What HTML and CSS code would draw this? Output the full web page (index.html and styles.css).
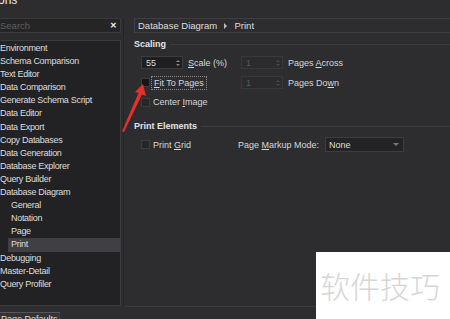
FILE: index.html
```html
<!DOCTYPE html>
<html lang="en">
<head>
    <meta charset="UTF-8">
    <title>Options</title>
    <link rel="stylesheet" href="styles.css">
</head>
<body>
    <div class="title"><span>ons</span></div>

    <div class="main">
        <aside class="nav">
            <div class="search">
                <span class="placeholder">Search</span>
                <span class="clear">&#x2715;</span>
            </div>
            <ul class="tree">
                <li>Environment</li>
                <li>Schema Comparison</li>
                <li>Text Editor</li>
                <li>Data Comparison</li>
                <li>Generate Schema Script</li>
                <li>Data Editor</li>
                <li>Data Export</li>
                <li>Copy Databases</li>
                <li>Data Generation</li>
                <li>Database Explorer</li>
                <li>Query Builder</li>
                <li>Database Diagram</li>
                <li class="child">General</li>
                <li class="child">Notation</li>
                <li class="child">Page</li>
                <li class="child selected">Print</li>
                <li>Debugging</li>
                <li>Master-Detail</li>
                <li>Query Profiler</li>
            </ul>
            <div class="foot-btn">t Page Defaults</div>
        </aside>

        <section class="page">
            <div class="crumb">Database Diagram <span class="crumb-sep"></span> Print</div>

            <div class="group-title"><span>Scaling</span></div>
            <div class="rows">
                <div class="row">
                    <div class="cell">
                        <div class="spin"><span>55</span><span class="spin-arrows"><i class="up"></i><i class="down"></i></span></div>
                        <span class="label"><u>S</u>cale (%)</span>
                    </div>
                    <div class="cell">
                        <div class="spin disabled"><span>1</span><span class="spin-arrows"><i class="up"></i><i class="down"></i></span></div>
                        <span class="label">Pages <u>A</u>cross</span>
                    </div>
                </div>
                <div class="row">
                    <div class="cell">
                        <span class="check filled"></span>
                        <span class="label focus"><u>F</u>it To Pages</span>
                    </div>
                    <div class="cell">
                        <div class="spin disabled"><span>1</span><span class="spin-arrows"><i class="up"></i><i class="down"></i></span></div>
                        <span class="label">Pages Do<u>w</u>n</span>
                    </div>
                </div>
                <div class="row">
                    <div class="cell">
                        <span class="check"></span>
                        <span class="label">Center <u>I</u>mage</span>
                    </div>
                </div>
            </div>

            <div class="group-title second"><span>Print Elements</span></div>
            <div class="rows">
                <div class="row">
                    <div class="cell">
                        <span class="check"></span>
                        <span class="label">Print <u>G</u>rid</span>
                    </div>
                    <div class="cell markup">
                        <span class="label">Page <u>M</u>arkup Mode:</span>
                        <div class="select"><span>None</span><span class="caret"></span></div>
                    </div>
                </div>
            </div>
        </section>
    </div>

    <svg class="arrow" width="36" height="56" viewBox="0 0 36 56">
        <polygon points="27,1 30,13 26,11.5 8,49 6,48.5 22.5,10 19,9" fill="#e5302b"/>
    </svg>

    <div class="watermark">软件技巧</div>
</body>
</html>
```

FILE: styles.css
```css
body {
    margin: 0;
    background-color: #2d2d30;
    color: #dedede;
    font-family: 'Liberation Sans', Arial, sans-serif;
    font-size: 9px;
    width: 450px;
    height: 319px;
    overflow: hidden;
    position: relative;
}

.title {
    height: 18px;
    overflow: hidden;
    font-size: 12px;
    color: #e8e8e8;
}

.title span {
    display: block;
    margin-top: -7px;
    margin-left: -2px;
}

.main {
    display: flex;
}

/* colonne de gauche */
.nav {
    width: 121px;
    flex-shrink: 0;
    display: flex;
    flex-direction: column;
}

.search {
    height: 15px;
    box-sizing: border-box;
    background-color: #252526;
    border: 1px solid #3a3a3d;
    border-left: none;
    display: flex;
    align-items: center;
    justify-content: space-between;
    padding: 0 3px 0 0;
}

.search .placeholder {
    color: #5e5e62;
    font-size: 9.5px;
}

.search .clear {
    color: #f2f2f2;
    font-size: 8px;
    font-weight: bold;
}

.tree {
    list-style: none;
    margin: 7px 0 0;
    padding: 1px 0 0;
    height: 266px;
    box-sizing: border-box;
    background-color: #222224;
    border: 1px solid #3c3c3f;
    border-left: none;
}

.tree li {
    line-height: 13.1px;
    height: 13.1px;
    white-space: nowrap;
    letter-spacing: -0.3px;
}

.tree li.child {
    margin-left: 8px;
    padding-left: 3px;
}

.tree li.selected {
    background-color: #404044;
}

.foot-btn {
    margin-top: 6px;
    height: 14px;
    width: 60px;
    box-sizing: border-box;
    border-top: 1px solid #55555a;
    border-right: 1px solid #45454a;
    background-color: #333336;
    line-height: 13px;
    white-space: nowrap;
    overflow: hidden;
    text-indent: -4px;
}

/* panneau de droite */
.page {
    flex: 1;
    margin-left: 2px;
    padding-left: 10px;
    height: 289px;
    border-left: 1px solid #242426;
    border-bottom: 1px solid #3a3a3d;
    box-sizing: border-box;
    min-width: 0;
}

.crumb {
    height: 15px;
    box-sizing: border-box;
    border: 1px solid #404044;
    border-right: none;
    line-height: 13px;
    padding-left: 3px;
    font-size: 9.5px;
    white-space: nowrap;
}

.crumb-sep {
    display: inline-block;
    width: 0;
    height: 0;
    border-left: 3px solid #bbbbbb;
    border-top: 3px solid transparent;
    border-bottom: 3px solid transparent;
    margin: 0 5px 0 4px;
    vertical-align: 0;
}

.group-title {
    display: flex;
    align-items: center;
    margin-top: 5px;
    height: 12px;
    font-weight: bold;
    color: #e4e4e4;
}

.group-title::after {
    content: "";
    flex: 1;
    height: 1px;
    background-color: #3c3c40;
    margin-left: 4px;
}

.group-title.second {
    margin-top: 8px;
}

.rows {
    padding-left: 7px;
    margin-top: 3px;
}

.row {
    display: grid;
    grid-template-columns: 100px auto;
    align-items: center;
    height: 19.7px;
}

.cell {
    display: flex;
    align-items: center;
}

.cell.markup {
    margin-left: -3px;
}

.label {
    white-space: nowrap;
    color: #d8d8d8;
}

.spin {
    flex-shrink: 0;
    width: 42px;
    height: 13px;
    box-sizing: border-box;
    background-color: #1f1f21;
    border: 1px solid #3d3d40;
    display: flex;
    align-items: center;
    justify-content: space-between;
    padding: 0 2px 0 4px;
    margin-right: 5px;
}

.spin-arrows {
    display: flex;
    flex-direction: column;
    gap: 2px;
}

.spin-arrows i {
    display: block;
    width: 0;
    height: 0;
    border-left: 2.5px solid transparent;
    border-right: 2.5px solid transparent;
}

.spin-arrows .up {
    border-bottom: 2.5px solid #8a8a8a;
}

.spin-arrows .down {
    border-top: 2.5px solid #8a8a8a;
}

.spin.disabled {
    background-color: #2b2b2e;
    border-color: #38383b;
    color: #58585b;
}

.spin.disabled .up {
    border-bottom-color: #48484b;
}

.spin.disabled .down {
    border-top-color: #48484b;
}

.check {
    flex-shrink: 0;
    width: 9px;
    height: 9px;
    box-sizing: border-box;
    border: 1px solid #3c3c40;
    background-color: #262628;
    margin-right: 3px;
}

.check.filled {
    background-color: #161618;
}

.focus {
    outline: 1px dotted #8a8a8a;
    outline-offset: 1px;
    padding: 0 1px;
}

.select {
    flex-shrink: 0;
    width: 79px;
    height: 15px;
    box-sizing: border-box;
    margin-left: 6px;
    background-color: #232325;
    border: 1px solid #3d3d40;
    display: flex;
    align-items: center;
    justify-content: space-between;
    padding: 0 4px 0 3px;
}

.caret {
    width: 0;
    height: 0;
    border-left: 3px solid transparent;
    border-right: 3px solid transparent;
    border-top: 3px solid #7a7a7a;
}

/* calques */
.arrow {
    position: absolute;
    left: 116px;
    top: 83px;
}

.watermark {
    position: absolute;
    left: 316px;
    top: 252px;
    width: 134px;
    height: 67px;
    background-color: #ffffff;
    color: #d6d6d6;
    font-family: 'Noto Sans CJK SC', sans-serif;
    font-weight: 300;
    font-size: 30px;
    line-height: 67px;
    padding-left: 4px;
    box-sizing: border-box;
    white-space: nowrap;
}
```
